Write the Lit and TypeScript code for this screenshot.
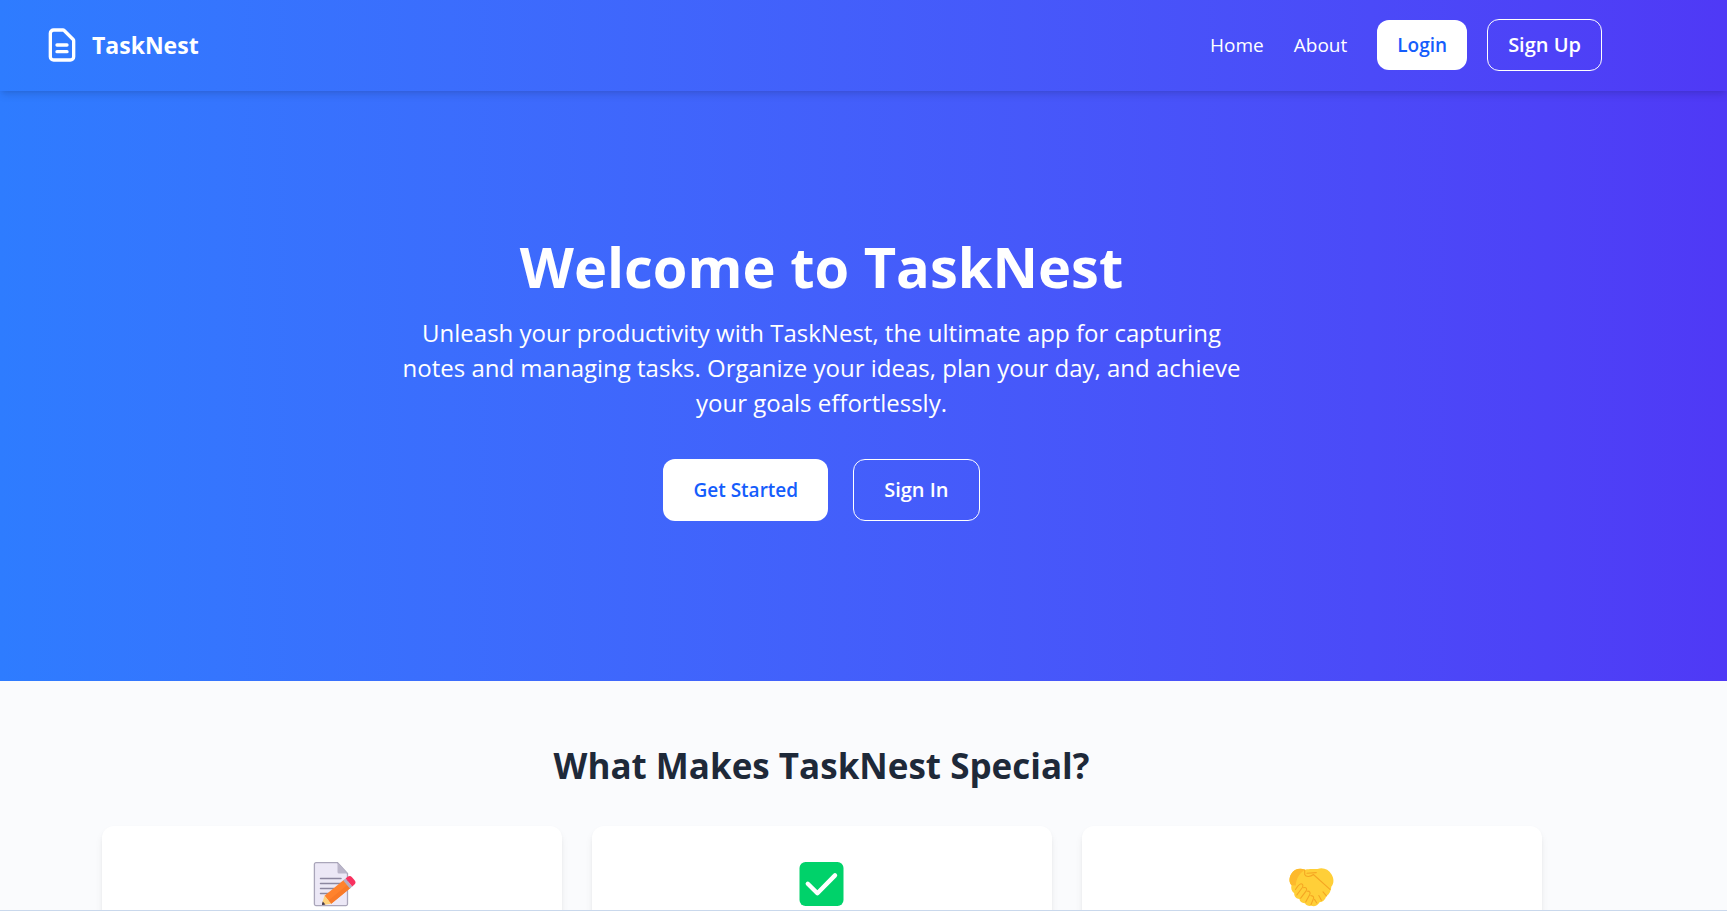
import { LitElement, html, css, svg } from "lit";
import { customElement } from "lit/decorators.js";

const logo = svg`<path d="M9 12h6m-6 4h6m2 5H7a2 2 0 01-2-2V5a2 2 0 012-2h5.586a1 1 0 01.707.293l5.414 5.414a1 1 0 01.293.707V19a2 2 0 01-2 2z"/>`;

const memo = svg`
  <path d="M7 1.7H28.5L38.5 12.5V43a1.6 1.6 0 0 1-1.6 1.6H7A1.6 1.6 0 0 1 5.4 43V3.3A1.6 1.6 0 0 1 7 1.7Z" fill="#ece8f6" stroke="#aaa6ba" stroke-width="1.3"/>
  <path d="M28.5 1.7L38.5 12.5H30a1.5 1.5 0 0 1-1.5-1.5Z" fill="#bbb6ca"/>
  <path d="M11.5 17.5H32M11.5 22.5H32M11.5 27.5H25M11.5 32.5H20" stroke="#8c87a0" stroke-width="1.5" stroke-linecap="round"/>
  <path d="M15.5 34.7L35.3 18.5L42 26.5L22.2 42.7Z" fill="#ff822d"/>
  <path d="M19.4 39.4L39.2 23.2L42 26.5L22.2 42.7Z" fill="#f97a28"/>
  <path d="M15.5 34.7L13 42.8A.9.9 0 0 0 13.9 44L22.2 42.7Z" fill="#ffd27a"/>
  <path d="M13.8 40.4L13 42.8A.9.9 0 0 0 13.9 44L16.4 43.6Z" fill="#433b50"/>
  <path d="M34.2 19.4L36.6 17.4L43.3 25.4L40.9 27.4Z" fill="#b5adc4"/>
  <path d="M36.6 17.4L38.6 15.8A3.2 3.2 0 0 1 43 16.2L45.6 19.3A3.2 3.2 0 0 1 45.2 23.8L43.3 25.4Z" fill="#f8315f"/>`;

const check = svg`
  <rect x=".5" y="1" width="44" height="44" rx="6" fill="#00d26a"/>
  <path d="M8.8 22.8L18.4 32.2L36 14.4" fill="none" stroke="#fff" stroke-width="4.4" stroke-linecap="round" stroke-linejoin="round"/>`;

const handshake = svg`
  <path d="M2.2 13C5 8 10.5 6.6 16.3 8.7C20 7.6 25 8.2 28.5 8C34 6.2 39.5 8.2 42.6 13.4C45.2 17.8 45 22.5 42.4 25.6C42 30 40.6 33.4 37.2 35.4C36.1 38.8 34 40.8 30.6 41.2C28.5 44.4 25.5 46 22.4 44.8C19.4 45.2 17 44.4 16 42.2C13 42.4 10.8 40.8 10.4 38.1C7.3 37.8 5.1 35.6 5.2 32.3C2.4 30.1 1.7 27.1 2.5 24.3C-.4 20.8 .2 16.6 2.2 13Z" fill="#ffcf38"/>
  <path d="M2.2 13C5 8 10.5 6.6 16.3 8.7C11.5 11 7 17 6.8 24.4L2.5 24.3C-.4 20.8 .2 16.6 2.2 13Z" fill="#fdb92c"/>
  <path d="M15.7 9.4V13.6C17 16.4 21.5 15.9 24.4 13.5L41 28.4M18 12.2L27.3 11.6M6.5 28.6C8 25.8 10 23.2 12.1 22.7C14.2 22.8 14.4 25 13 27L7.8 34M14.4 26.7C17.4 25.9 18.4 28 17 30.2L11.7 37.2M18.3 30.2C21 29.9 21.8 32 20.5 34L16.7 41M21.9 34.6C24.5 34.7 25.3 36.6 24.1 38.5L22 43.6M34 30.9L37.4 34.8M29.8 34.6L32.4 39.2M25.5 38.4L27.8 42" fill="none" stroke="#f5a623" stroke-width="1.1" stroke-linecap="round" stroke-linejoin="round"/>`;

const features = [
  { name: "Notes", art: memo },
  { name: "Tasks", art: check },
  { name: "Collaboration", art: handshake },
];

@customElement("app-root")
export class AppRoot extends LitElement {
  static styles = css`
    :host {
      --gutter: 84px;
      --brand: linear-gradient(to right in oklab, #2e7cff, #4f39f6);
      display: block;
      height: 100vh;
      overflow: hidden;
      background: #fafbfd;
      color: #fff;
      font-family: "Segoe UI", "Open Sans", "Noto Sans", sans-serif;
      font-size: 19px;
      line-height: 30px;
    }
    * { box-sizing: border-box; }
    a { color: inherit; text-decoration: none; }
    h1, h2, p { margin: 0; }
    .bar {
      position: relative;
      display: flex;
      align-items: center;
      justify-content: space-between;
      padding: 19px calc(var(--gutter) + 41px) 20px 42px;
      background: var(--brand);
      box-shadow: 0 5px 8px -1px rgb(0 0 0 / 0.1), 0 2px 5px -2px rgb(0 0 0 / 0.1);
    }
    .logo { display: flex; align-items: center; gap: 10px; font-size: 23px; line-height: 35px; font-weight: 700; }
    .mark {
      width: 40px; height: 40px; fill: none; stroke: currentColor;
      stroke-width: 2; stroke-linecap: round; stroke-linejoin: round;
    }
    .links { display: flex; align-items: center; gap: 30px; }
    .pair { display: flex; align-items: center; gap: 20px; }
    .button {
      font: inherit;
      font-size: 20px;
      font-weight: 600;
      color: #fff;
      background: transparent;
      border: 1px solid #fff;
      border-radius: 12px;
      padding: 10px 20px;
      cursor: pointer;
    }
    .solid { background: #fff; color: #155dfc; border: 0; font-size: 19px; }
    .hero {
      display: flex;
      flex-direction: column;
      align-items: center;
      padding: 138px var(--gutter) 160px 0;
      text-align: center;
      background: var(--brand);
    }
    .title { font-size: 56px; line-height: 75px; font-weight: 700; }
    .lead { max-width: 840px; margin: 11px 0 39px; font-size: 24px; line-height: 35px; }
    .actions { display: flex; gap: 25px; }
    .actions .button { padding: 15px 30px; }
    .actions .solid { padding: 16px 30px; }
    .special { padding: 60px var(--gutter) 60px 0; color: #1e2939; }
    .heading { font-size: 35px; line-height: 50px; font-weight: 700; text-align: center; }
    .cards {
      display: grid;
      grid-template-columns: repeat(3, 1fr);
      gap: 30px;
      max-width: 1440px;
      margin: 35px auto 0;
    }
    .card {
      display: flex;
      justify-content: center;
      padding: 35px 30px 180px;
      border-radius: 12px;
      background: #fff;
      box-shadow: 0 5px 8px -1px rgb(0 0 0 / 0.08), 0 2px 5px -2px rgb(0 0 0 / 0.08);
    }
    .art { width: 45px; height: 45px; overflow: visible; fill: none; }
    .edge { position: fixed; left: 0; right: 0; bottom: 0; height: 1px; background: #c9d8ec; }
  `;

  render() {
    return html`
      <header class="bar">
        <a class="logo" href="#">
          <svg class="mark" viewBox="0 0 24 24" aria-hidden="true">${logo}</svg>
          <span>TaskNest</span>
        </a>
        <nav class="links">
          <a href="#">Home</a>
          <a href="#">About</a>
          <div class="pair">
            <button class="button solid">Login</button>
            <button class="button">Sign Up</button>
          </div>
        </nav>
      </header>
      <main>
        <section class="hero">
          <h1 class="title">Welcome to TaskNest</h1>
          <p class="lead">
            Unleash your productivity with TaskNest, the ultimate app for capturing notes and
            managing tasks. Organize your ideas, plan your day, and achieve your goals effortlessly.
          </p>
          <div class="actions">
            <button class="button solid">Get Started</button>
            <button class="button">Sign In</button>
          </div>
        </section>
        <section class="special">
          <h2 class="heading">What Makes TaskNest Special?</h2>
          <div class="cards">
            ${features.map(
              (f) => html`<article class="card">
                <svg class="art" viewBox="0 0 45 45" aria-hidden="true">${f.art}</svg>
              </article>`
            )}
          </div>
        </section>
      </main>
      <div class="edge"></div>
    `;
  }
}
